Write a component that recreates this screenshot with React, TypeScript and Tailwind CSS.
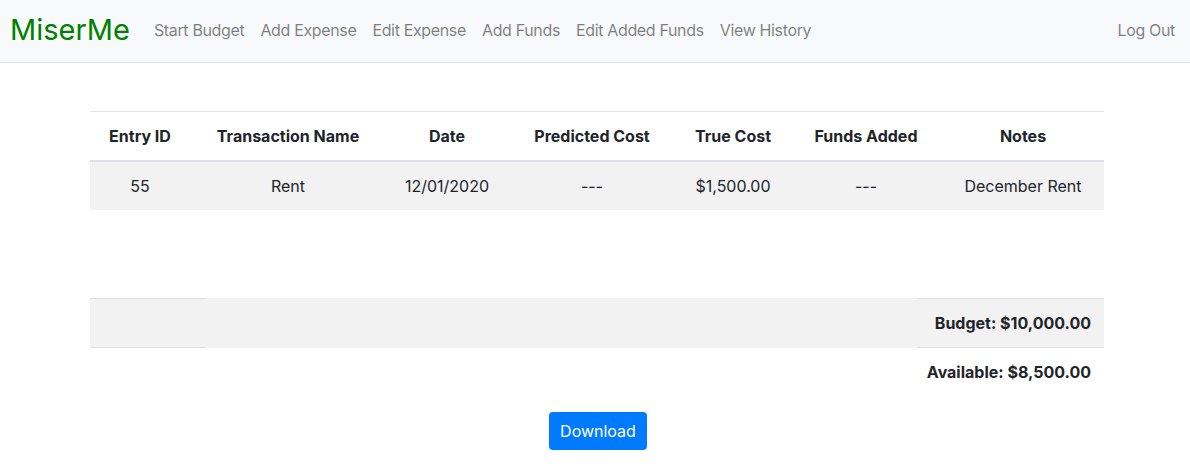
import React from "react";

const navLinks = [
	"Start Budget",
	"Add Expense",
	"Edit Expense",
	"Add Funds",
	"Edit Added Funds",
	"View History",
];

const headers = [
	"Entry ID",
	"Transaction Name",
	"Date",
	"Predicted Cost",
	"True Cost",
	"Funds Added",
	"Notes",
];

const rows = [["55", "Rent", "12/01/2020", "---", "$1,500.00", "---", "December Rent"]];

const cols = "grid grid-cols-[100px_196px_122px_168px_114px_152px_162px]";

const App = () => {
	return (
		<div className="min-h-screen bg-white text-[#212529] font-['Inter','Liberation_Sans',sans-serif]">
			<nav className="h-[63px] bg-[#f8f9fa] border-b border-[#dee2e6] flex items-center pl-[10px] pr-[7px] pb-[3px]">
				<span className="text-[29px] text-[#008000] mr-[16px] leading-none">
					MiserMe
				</span>
				<div className="flex items-center">
					{navLinks.map((link) => (
						<a
							key={link}
							className="px-2 text-base tracking-[-0.35px] text-black/50 cursor-pointer"
						>
							{link}
						</a>
					))}
				</div>
				<a className="ml-auto px-2 text-base tracking-[-0.35px] text-black/50 cursor-pointer">
					Log Out
				</a>
			</nav>

			<div className="w-[1014px] ml-[90px] mt-[48px]">
				<div className={`${cols} border-t border-b-2 border-[#dee2e6] font-bold`}>
					{headers.map((h) => (
						<div key={h} className="py-3 text-center leading-6">
							{h}
						</div>
					))}
				</div>
				{rows.map((row, i) => (
					<div key={i} className={`${cols} bg-[#f2f2f2]`}>
						{row.map((cell, j) => (
							<div key={j} className="py-3 text-center leading-6">
								{cell}
							</div>
						))}
					</div>
				))}

				<div className="mt-[88px]">
					<div className="flex bg-[#f2f2f2] h-[50px]">
						<div className="w-[116px] border-y border-[#dee2e6]" />
						<div className="flex-1" />
						<div className="w-[186px] border-y border-[#dee2e6] flex items-center justify-end pr-[13px] font-bold">
							Budget: $10,000.00
						</div>
					</div>
					<div className="flex justify-end pr-[13px] py-3 leading-6 font-bold">
						Available: $8,500.00
					</div>
				</div>

				<div className="flex justify-center mt-[16px] pl-[2px]">
					<button className="h-[38px] px-[11px] bg-[#007bff] text-white text-base rounded">
						Download
					</button>
				</div>
			</div>
		</div>
	);
};

export default App;
